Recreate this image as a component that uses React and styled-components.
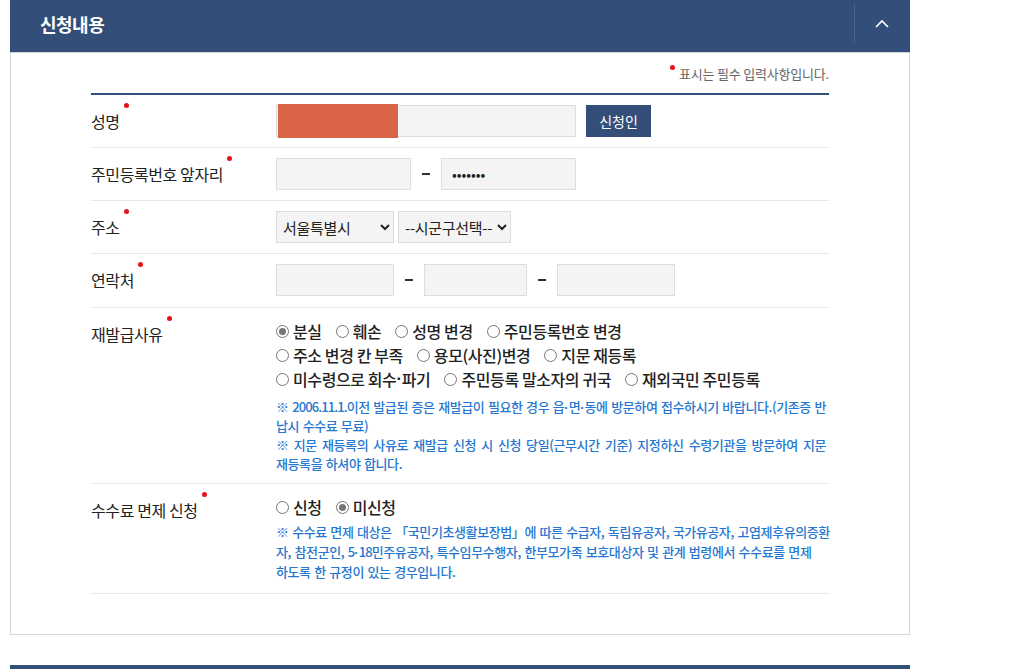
import React from 'react'
import styled, { createGlobalStyle } from 'styled-components'

const GlobalStyle = createGlobalStyle`
  body {
    margin: 0;
    background: #fff;
    font-family: "Noto Sans CJK KR", "Noto Sans", sans-serif;
    color: #222;
  }
`

const App = () => {
  const reasons = [
    ['분실', '훼손', '성명 변경', '주민등록번호 변경'],
    ['주소 변경 칸 부족', '용모(사진)변경', '지문 재등록'],
    [<>미수령으로 회수<Mid>·</Mid>파기</>, '주민등록 말소자의 귀국', '재외국민 주민등록'],
  ]

  return (
    <Page>
      <GlobalStyle />

      <SectionHeader>
        <Title>신청내용</Title>
        <ToggleButton>
          <svg width="14" height="9" viewBox="0 0 14 9">
            <path d="M1 8 L7 2 L13 8" fill="none" stroke="#fff" strokeWidth="1.6" />
          </svg>
        </ToggleButton>
      </SectionHeader>

      <Panel>
        <Notice>
          <Dot />표시는 필수 입력사항입니다.
        </Notice>

        <Form>
          <Row>
            <Label><Req>성명</Req></Label>
            <Field>
              <Masked>
                <Input $w={300} />
                <Redact />
              </Masked>
              <SubmitButton>신청인</SubmitButton>
            </Field>
          </Row>

          <Row>
            <Label><Req>주민등록번호 앞자리</Req></Label>
            <Field>
              <Input $w={135} />
              <Dash />
              <Input $w={135} defaultValue="•••••••" />
            </Field>
          </Row>

          <Row>
            <Label><Req>주소</Req></Label>
            <Field>
              <Select $w={118} defaultValue="seoul">
                <option value="seoul">서울특별시</option>
              </Select>
              <Select $w={113} $ml={4} defaultValue="none">
                <option value="none">--시군구선택--</option>
              </Select>
            </Field>
          </Row>

          <Row $pb={11}>
            <Label><Req>연락처</Req></Label>
            <Field>
              <Input $w={118} />
              <Dash />
              <Input $w={103} />
              <Dash />
              <Input $w={118} />
            </Field>
          </Row>

          <Row>
            <Label><Req>재발급사유</Req></Label>
            <Body>
              <RadioGroup>
                {reasons.map((line, i) => (
                  <RadioLine key={i}>
                    {line.map((r, j) => (
                      <RadioItem key={j}>
                        <RadioMark $on={i === 0 && j === 0} />
                        {r}
                      </RadioItem>
                    ))}
                  </RadioLine>
                ))}
              </RadioGroup>
              <Notes $lh={19} $mt={6}>
                <p>
                  <Line>※ <Digits>2006.11.1.</Digits>이전 발급된 증은 재발급이 필요한 경우 읍<Mid>·</Mid>면<Mid>·</Mid>동에 방문하여 접수하시기 바랍니다.(기존증 반</Line>
                  <Line>납시 수수료 무료)</Line>
                </p>
                <p>
                  <Line $ws={2.6}>※ 지문 재등록의 사유로 재발급 신청 시 신청 당일(근무시간 기준) 지정하신 수령기관을 방문하여 지문</Line>
                  <Line>재등록을 하셔야 합니다.</Line>
                </p>
              </Notes>
            </Body>
          </Row>

          <Row $pb={11}>
            <Label><Req>수수료 면제 신청</Req></Label>
            <Body>
              <RadioGroup>
                <RadioLine>
                  <RadioItem><RadioMark />신청</RadioItem>
                  <RadioItem><RadioMark $on />미신청</RadioItem>
                </RadioLine>
              </RadioGroup>
              <Notes $lh={20} $mt={3}>
                <p>
                  <Line>※ 수수료 면제 대상은 「국민기초생활보장법」에 따른 수급자, 독립유공자, 국가유공자, 고엽제후유의증환</Line>
                  <Line>자, 참전군인, <Digits>5</Digits><Mid>·</Mid><Digits>18</Digits>민주유공자, 특수임무수행자, 한부모가족 보호대상자 및 관계 법령에서 수수료를 면제</Line>
                  <Line>하도록 한 규정이 있는 경우입니다.</Line>
                </p>
              </Notes>
            </Body>
          </Row>
        </Form>
      </Panel>

      <NextHeader />
    </Page>
  )
}

export default App

const navy = '#344e7a'

const Page = styled.div`
  width: 900px;
  margin-left: 10px;
`

const SectionHeader = styled.div`
  height: 52px;
  background: ${navy};
  display: flex;
  align-items: center;
  justify-content: space-between;
`

const Title = styled.h2`
  margin: 0 0 4px 30px;
  color: #fff;
  font-size: 18px;
  font-weight: 700;
  letter-spacing: -0.5px;
`

const ToggleButton = styled.button`
  width: 56px;
  height: 40px;
  margin-bottom: 6px;
  border: none;
  border-left: 1px solid #4a6290;
  background: none;
  display: flex;
  align-items: center;
  justify-content: center;
  padding: 0 2px 0 0;
  cursor: pointer;
`

const Panel = styled.div`
  border: 1px solid #d5d5d5;
  border-top: 1px solid #d0d4da;
  padding: 0 80px 40px;
`

const Notice = styled.div`
  height: 40px;
  display: flex;
  align-items: center;
  justify-content: flex-end;
  font-size: 13px;
  color: #666;
  letter-spacing: -0.2px;
`

const Dot = styled.span`
  width: 5px;
  height: 5px;
  border-radius: 50%;
  background: #e8101a;
  margin: 0 4px 11px 0;
`

const Form = styled.div`
  border-top: 2px solid ${navy};
`

const Row = styled.div`
  display: flex;
  align-items: flex-start;
  padding: 10px 0 ${(p) => p.$pb || 10}px;
  border-bottom: 1px solid #e6e6e6;
`

const Label = styled.div`
  width: 185px;
  flex-shrink: 0;
  height: 32px;
  line-height: 32px;
  font-size: 16px;
  color: #222;
  letter-spacing: -0.4px;
`

const Req = styled.span`
  position: relative;

  &::after {
    content: '';
    position: absolute;
    right: -9px;
    top: -6px;
    width: 5px;
    height: 5px;
    border-radius: 50%;
    background: #e8101a;
  }
`

const Field = styled.div`
  display: flex;
  align-items: center;
`

const Masked = styled.div`
  position: relative;
`

const Redact = styled.span`
  position: absolute;
  left: 2px;
  top: -1px;
  width: 120px;
  height: 34px;
  background: #da6446;
`

const Input = styled.input`
  box-sizing: border-box;
  width: ${(p) => p.$w}px;
  height: 32px;
  border: 1px solid #ddd;
  background: #f4f4f4;
  padding: 0 10px;
  font-family: inherit;
  font-size: 14px;
  color: #222;
  display: block;
`

const Dash = styled.span`
  width: 30px;
  display: flex;
  justify-content: center;

  &::before {
    content: '';
    width: 8px;
    height: 2px;
    background: #333;
  }
`

const Select = styled.select`
  box-sizing: border-box;
  width: ${(p) => p.$w}px;
  height: 32px;
  margin-left: ${(p) => p.$ml || 0}px;
  border: 1px solid #ddd;
  border-radius: 0;
  background: #f4f4f4;
  padding: 0 2px;
  font-family: inherit;
  font-size: 15px;
  color: #222;
  letter-spacing: -0.3px;
`

const SubmitButton = styled.button`
  width: 65px;
  height: 32px;
  margin-left: 10px;
  border: none;
  background: ${navy};
  color: #fff;
  font-family: inherit;
  font-size: 14px;
  cursor: pointer;
`

const Body = styled.div`
  flex: 1;
  min-width: 0;
  padding-top: 1px;
`

const RadioGroup = styled.div`
  display: flex;
  flex-direction: column;
`

const RadioLine = styled.div`
  display: flex;
  gap: 14px;
  height: 24px;
  align-items: center;
`

const RadioItem = styled.label`
  display: flex;
  align-items: center;
  font-size: 16px;
  font-weight: 500;
  color: #222;
  letter-spacing: -0.4px;
  white-space: pre;
`

const RadioMark = styled.span`
  box-sizing: border-box;
  width: 13px;
  height: 13px;
  border-radius: 50%;
  border: 1px solid #767676;
  margin: 1px 4px 0 0;
  display: flex;
  align-items: center;
  justify-content: center;

  &::after {
    content: '';
    display: ${(p) => (p.$on ? 'block' : 'none')};
    width: 7px;
    height: 7px;
    border-radius: 50%;
    background: #767676;
  }
`

const Mid = styled.span`
  font-family: "Liberation Sans", sans-serif;
  font-weight: 700;
  letter-spacing: 0;
  line-height: 0;
`

const Digits = styled.span`
  letter-spacing: -0.9px;
`

const Notes = styled.div`
  margin-top: ${(p) => p.$mt}px;
  font-size: 13px;
  font-weight: 500;
  line-height: ${(p) => p.$lh}px;
  color: #2677d1;
  letter-spacing: -0.4px;
  word-spacing: 1px;

  p {
    margin: 0;
  }
`

const Line = styled.span`
  display: block;
  white-space: nowrap;
  ${(p) => (p.$ws ? `word-spacing: ${p.$ws}px;` : '')}
`

const NextHeader = styled.div`
  margin-top: 30px;
  height: 10px;
  background: ${navy};
`
